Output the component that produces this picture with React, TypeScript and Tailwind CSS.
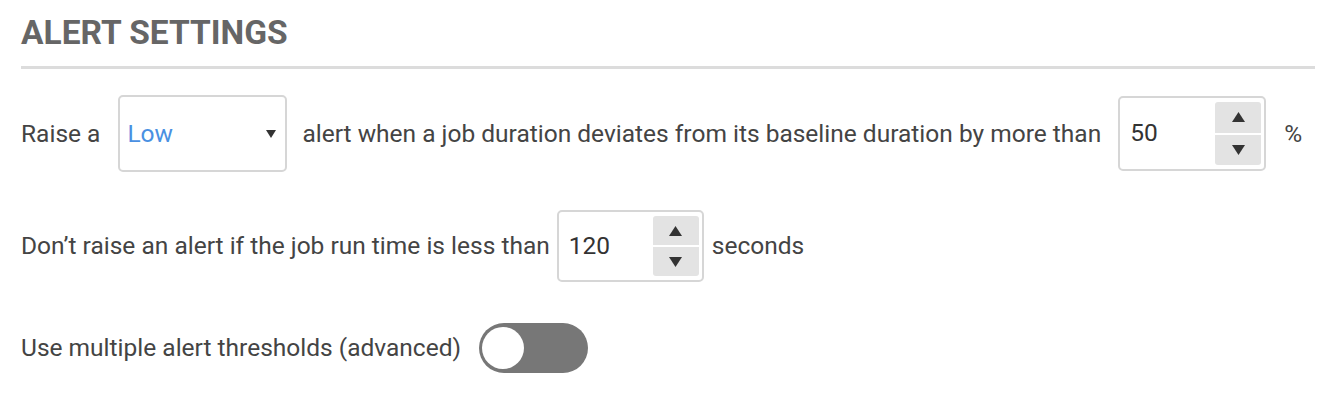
import React, { useState } from "react";

const Spinner = () => (
  <div className="flex flex-col w-[46px] h-full bg-[#e3e3e3] rounded-[3px] overflow-hidden">
    <button className="flex-1 flex items-center justify-center border-b-2 border-white">
      <svg width="13" height="10" viewBox="0 0 13 10">
        <path d="M6.5 0 L13 10 L0 10 Z" fill="#333" />
      </svg>
    </button>
    <button className="flex-1 flex items-center justify-center">
      <svg width="13" height="10" viewBox="0 0 13 10">
        <path d="M0 0 L13 0 L6.5 10 Z" fill="#333" />
      </svg>
    </button>
  </div>
);

const NumberBox = ({ value, className }: { value: string; className: string }) => (
  <div
    className={
      "flex items-stretch justify-between border-2 border-[#d6d6d6] rounded-[5px] bg-white py-[4px] pr-[3px] " +
      className
    }
  >
    <span className="self-center pl-[10px] text-[24.5px] text-[#333]">{value}</span>
    <Spinner />
  </div>
);

export default function App() {
  const [advanced, setAdvanced] = useState(false);

  return (
    <div className="w-[1317px] h-[400px] bg-white pl-[21px] pr-[2px] pt-[16px] text-[#444] font-['Roboto',sans-serif] text-[24.5px]">
      <h2 className="text-[33.5px] leading-[34px] font-bold text-[#666]">ALERT SETTINGS</h2>
      <div className="mt-[16px] h-[3px] bg-[#dcdcdc]" />

      {/* threshold row */}
      <div className="flex items-center mt-[26px] h-[77px]">
        <span className="pt-[2px]">Raise a</span>
        <div className="ml-[18px] w-[169px] h-[77px] border-2 border-[#d6d6d6] rounded-[5px] flex items-center justify-between pl-[7px] pr-[9px]">
          <span className="text-[#4a90e2] pt-[2px]">Low</span>
          <svg width="10" height="8" viewBox="0 0 10 8">
            <path d="M0 0 L10 0 L5 8 Z" fill="#333" />
          </svg>
        </div>
        <span className="ml-[15px] pt-[2px]">alert when a job duration deviates from its baseline duration by more than</span>
        <NumberBox value="50" className="ml-[17px] w-[148px] h-[75px]" />
        <span className="ml-[18px] pt-[2px]">%</span>
      </div>

      {/* minimum run time row */}
      <div className="flex items-center mt-[38px] h-[72px]">
        <span>Don’t raise an alert if the job run time is less than</span>
        <NumberBox value="120" className="ml-[7px] w-[147px] h-[72px]" />
        <span className="ml-[8px]">seconds</span>
      </div>

      {/* advanced toggle */}
      <div className="flex items-center mt-[41px] h-[50px]">
        <span>Use multiple alert thresholds (advanced)</span>
        <button
          onClick={() => setAdvanced(!advanced)}
          className={
            "ml-[18px] w-[109px] h-[50px] rounded-full bg-[#777] flex items-center px-[3px] " +
            (advanced ? "justify-end" : "justify-start")
          }
        >
          <span className="w-[42px] h-[42px] rounded-full bg-white" />
        </button>
      </div>
    </div>
  );
}
